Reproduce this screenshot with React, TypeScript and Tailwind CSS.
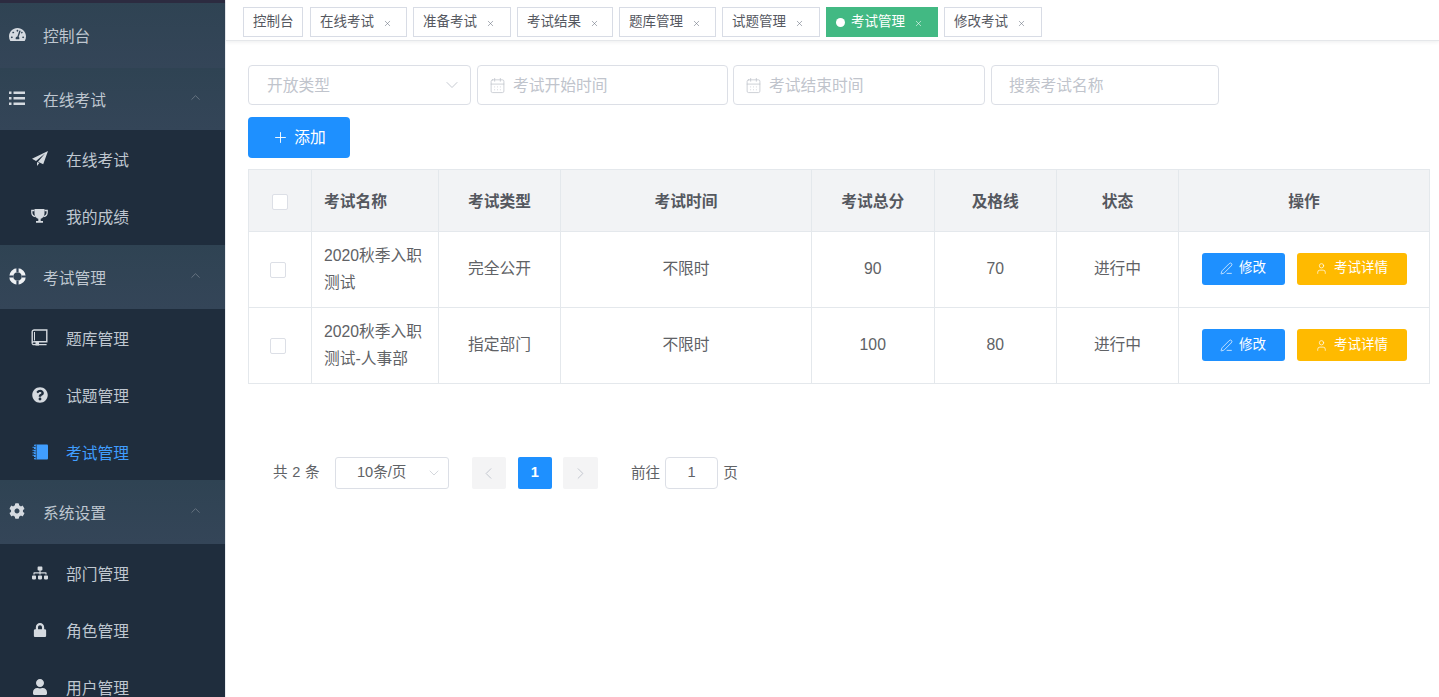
import React from "react";
import { FaTachometerAlt, FaQuestionCircle, FaCog, FaSitemap, FaLock, FaUser } from "react-icons/fa";
import { CalendarDays, ChevronDown, ChevronUp, ChevronLeft, ChevronRight, PenLine, Plus, User, X } from "lucide-react";

const BookIcon = () => (
  <svg width="17" height="17" viewBox="0 0 17 17" fill="none" stroke="currentColor" strokeWidth="1.400">
    <path d="M3.200 1h12.600v11.800H3.500A1.800 1.800 0 0 0 1.200 14.200V2.800A1.900 1.900 0 0 1 3.200 1Z" />
    <path d="M1.200 14.200A1.500 1.500 0 0 0 2.800 15.600h12.800" />
    <path d="M3.500 3v8.500" strokeWidth="1" />
    <rect x="4.500" y="13" width="3.500" height="3.500" fill="currentColor" stroke="none" />
  </svg>
);

const NotebookIcon = () => (
  <svg width="16" height="16" viewBox="0 0 16 16" fill="currentColor">
    <rect x="2" y="0.500" width="14" height="15" rx="1" />
    <path d="M0.500 2.500h3M0.500 5.500h3M0.500 8h3M0.500 10.500h3M0.500 13.500h3" stroke="#1f2d3d" strokeWidth="1" />
    <path d="M0.500 3.300h3M0.500 6.300h3M0.500 8.800h3M0.500 11.300h3" stroke="currentColor" strokeWidth="0.900" />
    <path d="M4.300 0.500v15" stroke="#1f2d3d" strokeWidth="0.700" />
  </svg>
);

const RingIcon = () => (
  <svg width="17" height="17" viewBox="0 0 17 17" fill="none">
    <circle cx="8.500" cy="8.500" r="6.300" stroke="#eef1f4" strokeWidth="4" />
    <path d="M8.500 0v4M8.500 13v4M0 8.500h4M13 8.500h4" stroke="#33455a" strokeWidth="2.200" />
  </svg>
);

const ListIcon = () => (
  <svg width="16" height="15" viewBox="0 0 16 15" fill="currentColor">
    <rect x="0" y="0.500" width="2.500" height="2.500" />
    <rect x="0" y="6" width="2.500" height="2.500" />
    <rect x="0" y="11.500" width="2.500" height="2.500" />
    <rect x="4.500" y="0.500" width="11.500" height="2.500" />
    <rect x="4.500" y="6" width="11.500" height="2.500" />
    <rect x="4.500" y="11.500" width="11.500" height="2.500" />
  </svg>
);

const PlaneIcon = () => (
  <svg width="16" height="15" viewBox="0 0 16 15" fill="currentColor">
    <path d="M16 0 0 7.800l4 2.100L13 2.500 6 10.800l5.200 2.400ZM5 11v4l2.400-2.900Z" />
  </svg>
);

const TrophyIcon = () => (
  <svg width="17" height="15" viewBox="0 0 17 15" fill="currentColor">
    <path d="M3.500 0h10v4.500c0 3-2 4.700-3.800 5.300v2.200h2.300v1.800H5v-1.800h2.300V9.800C5.500 9.200 3.500 7.500 3.500 4.500Z" />
    <path d="M3.500 1.500H.8v2c0 2.200 1.600 3.800 3.700 4.200M13.500 1.500h2.700v2c0 2.200-1.600 3.800-3.700 4.200" fill="none" stroke="currentColor" strokeWidth="1.300" />
  </svg>
);

function Group({ icon, label, arrow = true, h = "h-[64px]" }: { icon: React.ReactNode; label: string; arrow?: boolean; h?: string }) {
  return (
    <div className={`${h} flex items-center bg-gradient-to-b from-[#2f4353] to-[#344558] text-[#bfc7d0]`}>
      <span className="-mt-[2px] flex w-[33px] shrink-0 justify-center pl-[1px] text-[#d5dae0]">{icon}</span>
      <span className="ml-[10px] mt-[3px] text-[15.750px] leading-none">{label}</span>
      {arrow && <ChevronUp size={15} strokeWidth={1.200} className="ml-auto mr-[22px] -mt-[4px] text-[#75818e]" />}
    </div>
  );
}

function Sub({ icon, label, active = false, h = "h-[57px]" }: { icon: React.ReactNode; label: string; active?: boolean; h?: string }) {
  return (
    <div className={`${h} flex items-center bg-[#1f2d3d] ${active ? "text-[#409eff]" : "text-[#bfc7d0]"}`}>
      <span className={`ml-[31px] flex w-[17px] shrink-0 justify-center ${active ? "text-[#409eff]" : "text-[#d5dae0]"}`}>{icon}</span>
      <span className="ml-[18px] mt-[4px] text-[15.750px] leading-none">{label}</span>
    </div>
  );
}

function Tag({ label, w, closable = true, active = false }: { label: string; w: string; closable?: boolean; active?: boolean }) {
  return (
    <div className={`${w} flex h-[30px] shrink-0 items-center border pl-[9px] text-[13.500px] leading-none ${active ? "border-[#42b983] bg-[#42b983] text-white" : "border-[#d8dce5] bg-white text-[#55585f]"}`}>
      {active && <span className="mr-[6px] h-[9px] w-[9px] rounded-full bg-white" />}
      <span>{label}</span>
      {closable && <X size={9} strokeWidth={1.500} className={`ml-[9px] mt-[2px] ${active ? "text-white" : "text-[#6b7280]"}`} />}
    </div>
  );
}

function Field({ w, label, icon = false, chevron = false }: { w: string; label: string; icon?: boolean; chevron?: boolean }) {
  return (
    <div className={`${w} flex h-[40px] shrink-0 items-center rounded-[4px] border border-[#dcdfe6] bg-white text-[15.750px] leading-none text-[#c0c4cc]`}>
      {icon ? <CalendarDays size={17} strokeWidth={1.100} className="ml-[11px] mr-[7px]" /> : <span className={chevron ? "ml-[18px]" : "ml-[17px]"} />}
      <span className="mt-[2px]">{label}</span>
      {chevron && <ChevronDown size={20} strokeWidth={1.100} className="ml-auto mr-[8px]" />}
    </div>
  );
}

const Box = ({ cls = "" }: { cls?: string }) => <span className={`inline-block h-[16px] w-[16px] rounded-[2px] border border-[#dcdfe6] bg-white align-middle ${cls}`} />;

const th = "border-r border-[#e4e8ec] text-center font-bold text-[#55585f] text-[15.750px]";
const td = "border-r border-[#e4e8ec] text-center text-[#606266] text-[15.750px]";

function Row({ name, type, score, pass, up, last = false }: { name: React.ReactNode; type: string; score: string; pass: string; up: string; last?: boolean }) {
  return (
    <tr className={`${last ? "h-[76px]" : "h-[76px] border-b border-[#e4e8ec]"}`}>
      <td className={td}><div className={`${up} -translate-x-[2px]`}><Box /></div></td>
      <td className={`${td} !text-left pl-[12px] leading-[27px]`}><div className={up}>{name}</div></td>
      <td className={td}><div className={up}>{type}</div></td>
      <td className={td}><div className={up}>不限时</div></td>
      <td className={td}><div className={up}>{score}</div></td>
      <td className={td}><div className={up}>{pass}</div></td>
      <td className={td}><div className={up}>进行中</div></td>
      <td className="text-center text-[13.500px]">
        <div className={`flex justify-center gap-[12px] text-white ${up}`}>
          <span className="flex h-[32px] w-[83px] items-center justify-center rounded-[3px] bg-[#1e90ff]"><PenLine size={13} strokeWidth={1.300} className="mr-[6px]" />修改</span>
          <span className="flex h-[32px] w-[110px] items-center justify-center rounded-[3px] bg-[#ffba00]"><User size={13} strokeWidth={1.300} className="mr-[6px]" />考试详情</span>
        </div>
      </td>
    </tr>
  );
}

export default function App() {
  return (
    <div className="flex h-[697px] w-[1439px] overflow-hidden bg-white font-['Liberation_Sans','Noto_Sans_CJK_SC',sans-serif]">
      <aside className="flex w-[225px] shrink-0 flex-col overflow-hidden bg-[#1f2d3d]">
        <div className="h-[3px] shrink-0 bg-[#2c2b40]" />
        <Group h="h-[65px] shrink-0" icon={<FaTachometerAlt size={17} />} label="控制台" arrow={false} />
        <Group h="h-[62px] shrink-0" icon={<ListIcon />} label="在线考试" />
        <Sub icon={<PlaneIcon />} label="在线考试" h="h-[57px] shrink-0" />
        <Sub icon={<TrophyIcon />} label="我的成绩" h="h-[58px] shrink-0" />
        <Group h="h-[64px] shrink-0" icon={<RingIcon />} label="考试管理" />
        <Sub icon={<BookIcon />} label="题库管理" h="h-[57px] shrink-0" />
        <Sub icon={<FaQuestionCircle size={16} />} label="试题管理" h="h-[57px] shrink-0" />
        <Sub icon={<NotebookIcon />} label="考试管理" active h="h-[57px] shrink-0" />
        <Group h="h-[64px] shrink-0" icon={<FaCog size={16} />} label="系统设置" />
        <Sub icon={<FaSitemap size={16} />} label="部门管理" h="h-[57px] shrink-0" />
        <Sub icon={<FaLock size={14} />} label="角色管理" h="h-[57px] shrink-0" />
        <Sub icon={<FaUser size={16} />} label="用户管理" h="h-[57px] shrink-0" />
      </aside>
      <main className="min-w-0 flex-1 border-l border-[#e8ebef]">
        <div className="flex h-[41px] border-b border-[#e5e7ea] pl-[17px] pt-[7px] shadow-[0_1px_4px_rgba(0,21,41,0.08)]">
          <Tag w="w-[60px]" label="控制台" closable={false} />
          <div className="flex gap-[6px] pl-[7px]">
            <Tag w="w-[97px]" label="在线考试" />
            <Tag w="w-[98px]" label="准备考试" />
            <Tag w="w-[96px]" label="考试结果" />
            <Tag w="w-[97px]" label="题库管理" />
            <Tag w="w-[98px]" label="试题管理" />
            <Tag w="w-[112px]" label="考试管理" active />
            <Tag w="w-[98px]" label="修改考试" />
          </div>
        </div>
        <div className="pl-[22px] pt-[24px]">
          <div className="flex">
            <Field w="w-[223px]" label="开放类型" chevron />
            <div className="w-[6px]" />
            <Field w="w-[251px]" label="考试开始时间" icon />
            <div className="w-[5px]" />
            <Field w="w-[252px]" label="考试结束时间" icon />
            <div className="w-[6px]" />
            <Field w="w-[228px]" label="搜索考试名称" />
          </div>
          <div className="mt-[12px] flex h-[41px] w-[102px] items-center justify-center rounded-[4px] bg-[#1e90ff] text-[15.750px] leading-none text-white">
            <Plus size={17} strokeWidth={1.300} className="mr-[5px]" />添加
          </div>
          <table className="mt-[11px] w-[1181px] table-fixed border-collapse border border-[#e4e8ec]">
            <colgroup>
              <col className="w-[63px]" /><col className="w-[127px]" /><col className="w-[122px]" /><col className="w-[251px]" />
              <col className="w-[122.500px]" /><col className="w-[122.500px]" /><col className="w-[122px]" /><col className="w-[251px]" />
            </colgroup>
            <thead>
              <tr className="h-[62px] border-b border-[#e4e8ec] bg-[#f2f3f5]">
                <th className={th}><Box /></th>
                <th className={`${th} !text-left pl-[12px]`}><div className="mt-[3px]">考试名称</div></th>
                <th className={th}><div className="mt-[3px]">考试类型</div></th>
                <th className={th}><div className="mt-[3px]">考试时间</div></th>
                <th className={th}><div className="mt-[3px]">考试总分</div></th>
                <th className={th}><div className="mt-[3px]">及格线</div></th>
                <th className={th}><div className="mt-[3px]">状态</div></th>
                <th className="text-center text-[15.750px] font-bold text-[#55585f]"><div className="mt-[3px]">操作</div></th>
              </tr>
            </thead>
            <tbody>
              <Row up="-mt-[2px]" name={<>2020秋季入职<br />测试</>} type="完全公开" score="90" pass="70" />
              <Row up="-mt-[1px]" name={<>2020秋季入职<br />测试-人事部</>} type="指定部门" score="100" pass="80" last />
            </tbody>
          </table>
          <div className="mt-[73px] flex h-[32px] items-center text-[#606266]">
            <span className="ml-[25px] text-[14.600px] tracking-[0.300px]">共 2 条</span>
            <div className="ml-[15px] flex h-[32px] w-[114px] items-center rounded-[3px] border border-[#dcdfe6] text-[14.600px]">
              <span className="ml-[21px]">10条/页</span>
              <ChevronDown size={16} strokeWidth={1} className="ml-auto mr-[6px] text-[#c0c4cc]" />
            </div>
            <span className="ml-[23px] flex h-[32px] w-[34px] items-center justify-center rounded-[2px] bg-[#f4f4f5] text-[#c0c4cc]"><ChevronLeft size={19} strokeWidth={1.200} /></span>
            <span className="ml-[12px] flex h-[32px] w-[34px] items-center justify-center rounded-[2px] bg-[#1e90ff] text-[14.600px] font-bold text-white">1</span>
            <span className="ml-[11px] flex h-[32px] w-[35px] items-center justify-center rounded-[2px] bg-[#f4f4f5] text-[#c0c4cc]"><ChevronRight size={19} strokeWidth={1.200} /></span>
            <span className="ml-[33px] mt-[1px] text-[14.600px]">前往</span>
            <span className="ml-[5px] flex h-[32px] w-[53px] items-center justify-center rounded-[4px] border border-[#dcdfe6] text-[14.600px]">1</span>
            <span className="ml-[5px] mt-[1px] text-[14.600px]">页</span>
          </div>
        </div>
      </main>
    </div>
  );
}
